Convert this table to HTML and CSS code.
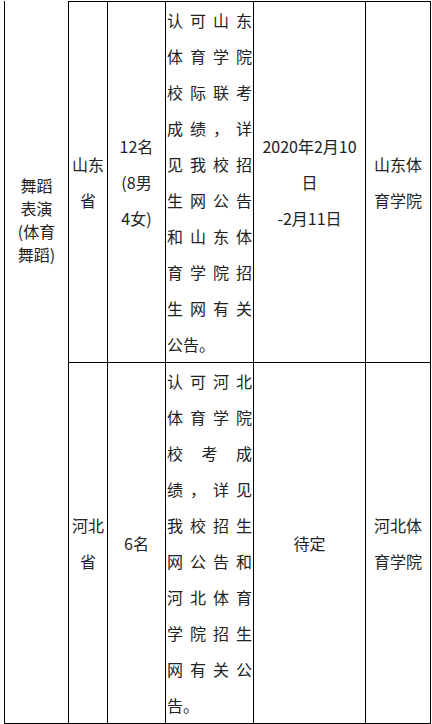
FILE: index.html
```html
<!DOCTYPE html>
<html lang="zh-CN">
<head>
<meta charset="utf-8">
<title>招生计划</title>
<link rel="stylesheet" href="styles.css">
</head>
<body>
<table class="plan">
  <tbody>
    <tr class="row-first">
      <td class="major" rowspan="2">舞蹈<br>表演<br>(体育<br>舞蹈)</td>
      <td class="prov w2">山东<br>省</td>
      <td class="num w3">12名<br>(8男<br>4女)</td>
      <td class="req w4">
        <div class="jl">认可山东</div>
        <div class="jl">体育学院</div>
        <div class="jl">校际联考</div>
        <div class="jl">成绩，详</div>
        <div class="jl">见我校招</div>
        <div class="jl">生网公告</div>
        <div class="jl">和山东体</div>
        <div class="jl">育学院招</div>
        <div class="jl">生网有关</div>
        <div>公告。</div>
      </td>
      <td class="date w5">2020年2月10<br>日<br>-2月11日</td>
      <td class="site w6">山东体<br>育学院</td>
    </tr>
    <tr>
      <td class="prov">河北<br>省</td>
      <td class="num">6名</td>
      <td class="req">
        <div class="jl">认可河北</div>
        <div class="jl">体育学院</div>
        <div class="jl">校考成</div>
        <div class="jl">绩，详见</div>
        <div class="jl">我校招生</div>
        <div class="jl">网公告和</div>
        <div class="jl">河北体育</div>
        <div class="jl">学院招生</div>
        <div class="jl">网有关公</div>
        <div>告。</div>
      </td>
      <td class="date">待定</td>
      <td class="site">河北体<br>育学院</td>
    </tr>
  </tbody>
</table>
</body>
</html>
```

FILE: styles.css
```css
html, body {
  margin: 0;
  padding: 0;
  background: #ffffff;
}

body {
  font-family: "Noto Sans CJK SC", "Noto Sans", sans-serif;
  font-size: 16px;
  color: #222222;
}

.plan {
  table-layout: fixed;
  border-collapse: separate;
  border-spacing: 0;
  width: 427px;
  margin: 1px 0 0 4px;
}

.plan td {
  box-sizing: border-box;
  border-right: 1px solid #000;
  border-bottom: 1px solid #000;
  padding: 0;
  text-align: center;
  vertical-align: middle;
  line-height: 36px;
}

.row-first td {
  border-top: 1px solid #000;
}

.plan td.major {
  border-top: none;
  border-left: 1px solid #000;
  width: 65px;
  vertical-align: top;
  padding-top: 173px;
  font-size: 16px;
  line-height: 23px;
}

.w2 { width: 39px; }
.w3 { width: 58px; }
.w4 { width: 88px; }
.w5 { width: 112px; }
.w6 { width: 65px; }

.plan td.req {
  text-align: left;
  padding: 0 1px 0 1px;
  vertical-align: top;
}

.jl {
  text-align: justify;
  text-align-last: justify;
}
```
